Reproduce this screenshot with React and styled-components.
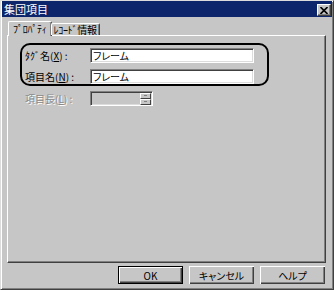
import React from 'react'
import styled, { createGlobalStyle } from 'styled-components'

const GlobalStyle = createGlobalStyle`
    html, body {
        margin: 0;
        padding: 0;
        background: #c6c6c6;
    }
    * {
        box-sizing: border-box;
    }
`

const font = `"Noto Sans CJK JP", "Noto Sans", sans-serif`

const Window = styled.div`
    width: 334px;
    height: 290px;
    background: #c6c6c6;
    border-top: 1px solid #dcdcdc;
    border-left: 1px solid #dcdcdc;
    border-right: 1px solid #404040;
    border-bottom: 1px solid #404040;
    box-shadow: inset 1px 1px #ffffff, inset -1px -1px #808080;
    display: flex;
    flex-direction: column;
    font-family: ${font};
    font-size: 10px;
    color: #000;
`

const TitleBar = styled.div`
    height: 16px;
    margin: 0 1px;
    background: #0c256b;
    display: flex;
    align-items: center;
    justify-content: space-between;
    padding: 0 1px 0 2px;
`

const Title = styled.span`
    color: #fff;
    font-size: 11px;
    line-height: 16px;
`

const CloseButton = styled.div`
    width: 14px;
    height: 12px;
    margin-top: 2px;
    background: #c6c6c6;
    border-top: 1px solid #fff;
    border-left: 1px solid #fff;
    border-right: 1px solid #404040;
    border-bottom: 1px solid #404040;
    box-shadow: inset -1px -1px #808080;
    display: flex;
    align-items: center;
    justify-content: center;
`

const Body = styled.div`
    flex: 1;
    display: flex;
    flex-direction: column;
    padding: 4px 7px 5px 6px;
`

const TabStrip = styled.div`
    display: flex;
    align-items: flex-end;
    height: 14px;
    padding-left: 1px;
    position: relative;
    z-index: 1;
`

const Tab = styled.div`
    height: ${p => (p.$active ? '15px' : '12px')};
    margin-bottom: ${p => (p.$active ? '-1px' : '0')};
    padding: 0 ${p => (p.$active ? '4px' : '2px')};
    background: #c6c6c6;
    border-top: 1px solid #fff;
    border-left: 1px solid #fff;
    border-right: 1px solid #404040;
    border-radius: 2px 2px 0 0;
    box-shadow: inset -1px 0 #808080;
    line-height: ${p => (p.$active ? '13px' : '11px')};
    white-space: nowrap;
    letter-spacing: -0.3px;
    margin-left: ${p => (p.$first ? '0' : '-1px')};
`

const Panel = styled.div`
    flex: 1;
    border-top: 1px solid #fff;
    border-left: 1px solid #fff;
    border-right: 1px solid #404040;
    border-bottom: 1px solid #404040;
    box-shadow: inset -1px -1px #808080;
    padding: 7px 0 0 12px;
`

const Group = styled.div`
    width: 249px;
    border: 2px solid #000;
    border-radius: 10px;
    padding: 3px 0 0 3px;
    display: flex;
    flex-direction: column;
    gap: 6px;
`

const Row = styled.div`
    display: flex;
    align-items: center;
    height: 15px;
    padding-left: ${p => (p.$outside ? '5px' : '0')};
    margin-top: ${p => (p.$outside ? '5px' : '0')};
`

const Label = styled.span`
    width: 65px;
    line-height: 15px;
    white-space: nowrap;
    color: ${p => (p.$disabled ? '#8a8a8a' : '#000')};
    text-shadow: ${p => (p.$disabled ? '1px 1px #fff' : 'none')};
`

const Field = styled.div`
    width: ${p => p.$width}px;
    height: 15px;
    background: ${p => (p.$disabled ? '#c6c6c6' : '#fff')};
    border-top: 1px solid #808080;
    border-left: 1px solid #808080;
    border-right: 1px solid #fff;
    border-bottom: 1px solid #fff;
    box-shadow: inset 1px 1px #404040, inset -1px -1px #dcdcdc;
    padding: 0 2px;
    line-height: 13px;
    font-feature-settings: "palt";
    display: flex;
    align-items: center;
    justify-content: space-between;
`

const Spin = styled.div`
    display: flex;
    flex-direction: column;
    margin-right: -1px;
`

const SpinButton = styled.div`
    width: 11px;
    height: 6px;
    background: #c6c6c6;
    border-top: 1px solid #fff;
    border-left: 1px solid #fff;
    border-right: 1px solid #404040;
    border-bottom: 1px solid #404040;
    display: flex;
    align-items: center;
    justify-content: center;
    &::after {
        content: '';
        width: 3px;
        height: 1px;
        background: #808080;
    }
`

const ButtonRow = styled.div`
    display: flex;
    justify-content: flex-end;
    gap: 6px;
    margin-top: 3px;
    padding-right: 1px;
`

const Button = styled.div`
    width: 65px;
    height: 18px;
    background: #c6c6c6;
    border: ${p => (p.$default ? '1px solid #000' : 'none')};
    box-shadow: inset 1px 1px #fff, inset -1px -1px #404040, inset -2px -2px #808080;
    display: flex;
    align-items: center;
    justify-content: center;
    font-feature-settings: "palt";
`

function App() {
    return (
        <>
            <GlobalStyle />
            <Window>
                <TitleBar>
                    <Title>集団項目</Title>
                    <CloseButton>
                        <svg width="8" height="7" viewBox="0 0 8 7">
                            <path d="M0.5 0 L7.5 7 M7.5 0 L0.5 7" stroke="#000" strokeWidth="1.6" />
                        </svg>
                    </CloseButton>
                </TitleBar>
                <Body>
                    <TabStrip>
                        <Tab $active $first>ﾌﾟﾛﾊﾟﾃｨ</Tab>
                        <Tab>ﾚｺｰﾄﾞ情報</Tab>
                    </TabStrip>
                    <Panel>
                        <Group>
                            <Row>
                                <Label>ﾀｸﾞ名(<u>X</u>) :</Label>
                                <Field $width={164}>フレーム</Field>
                            </Row>
                            <Row>
                                <Label>項目名(<u>N</u>) :</Label>
                                <Field $width={164}>フレーム</Field>
                            </Row>
                        </Group>
                        <Row $outside>
                            <Label $disabled>項目長(<u>L</u>) :</Label>
                            <Field $width={63} $disabled>
                                <span />
                                <Spin>
                                    <SpinButton />
                                    <SpinButton />
                                </Spin>
                            </Field>
                        </Row>
                    </Panel>
                    <ButtonRow>
                        <Button $default>OK</Button>
                        <Button>キャンセル</Button>
                        <Button>ヘルプ</Button>
                    </ButtonRow>
                </Body>
            </Window>
        </>
    )
}

export default App
